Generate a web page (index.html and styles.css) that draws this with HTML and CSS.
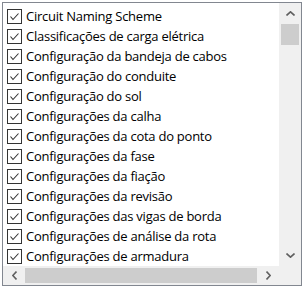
FILE: index.html
```html
<!DOCTYPE html>
<html>
<head>
<meta charset="utf-8">
<link rel="stylesheet" href="styles.css">
</head>
<body>
<div class="listbox">
  <div class="items">
    <div class="item"><span class="cb"><svg viewBox="0 0 13 13"><polyline points="2.5,6.5 5,9.5 10.5,3.5"/></svg></span><span class="label">Circuit Naming Scheme</span></div>
    <div class="item"><span class="cb"><svg viewBox="0 0 13 13"><polyline points="2.5,6.5 5,9.5 10.5,3.5"/></svg></span><span class="label">Classificações de carga elétrica</span></div>
    <div class="item"><span class="cb"><svg viewBox="0 0 13 13"><polyline points="2.5,6.5 5,9.5 10.5,3.5"/></svg></span><span class="label">Configuração da bandeja de cabos</span></div>
    <div class="item"><span class="cb"><svg viewBox="0 0 13 13"><polyline points="2.5,6.5 5,9.5 10.5,3.5"/></svg></span><span class="label">Configuração do conduite</span></div>
    <div class="item"><span class="cb"><svg viewBox="0 0 13 13"><polyline points="2.5,6.5 5,9.5 10.5,3.5"/></svg></span><span class="label">Configuração do sol</span></div>
    <div class="item"><span class="cb"><svg viewBox="0 0 13 13"><polyline points="2.5,6.5 5,9.5 10.5,3.5"/></svg></span><span class="label">Configurações da calha</span></div>
    <div class="item"><span class="cb"><svg viewBox="0 0 13 13"><polyline points="2.5,6.5 5,9.5 10.5,3.5"/></svg></span><span class="label">Configurações da cota do ponto</span></div>
    <div class="item"><span class="cb"><svg viewBox="0 0 13 13"><polyline points="2.5,6.5 5,9.5 10.5,3.5"/></svg></span><span class="label">Configurações da fase</span></div>
    <div class="item"><span class="cb"><svg viewBox="0 0 13 13"><polyline points="2.5,6.5 5,9.5 10.5,3.5"/></svg></span><span class="label">Configurações da fiação</span></div>
    <div class="item"><span class="cb"><svg viewBox="0 0 13 13"><polyline points="2.5,6.5 5,9.5 10.5,3.5"/></svg></span><span class="label">Configurações da revisão</span></div>
    <div class="item"><span class="cb"><svg viewBox="0 0 13 13"><polyline points="2.5,6.5 5,9.5 10.5,3.5"/></svg></span><span class="label">Configurações das vigas de borda</span></div>
    <div class="item"><span class="cb"><svg viewBox="0 0 13 13"><polyline points="2.5,6.5 5,9.5 10.5,3.5"/></svg></span><span class="label">Configurações de análise da rota</span></div>
    <div class="item"><span class="cb"><svg viewBox="0 0 13 13"><polyline points="2.5,6.5 5,9.5 10.5,3.5"/></svg></span><span class="label">Configurações de armadura</span></div>
  </div>
  <div class="vscroll">
    <div class="arrow"><svg viewBox="0 0 9 5"><polyline points="0.5,4.5 4.5,0.8 8.5,4.5"/></svg></div>
    <div class="vtrack"><div class="vthumb"></div></div>
    <div class="arrow"><svg viewBox="0 0 9 5"><polyline points="0.5,0.5 4.5,4.2 8.5,0.5"/></svg></div>
  </div>
  <div class="hscroll">
    <div class="harrow"><svg viewBox="0 0 5 9"><polyline points="4.5,0.5 0.8,4.5 4.5,8.5"/></svg></div>
    <div class="htrack"><div class="hthumb"></div></div>
    <div class="harrow"><svg viewBox="0 0 5 9"><polyline points="0.5,0.5 4.2,4.5 0.5,8.5"/></svg></div>
  </div>
  <div class="corner"></div>
</div>
</body>
</html>
```
FILE: styles.css
```css
html, body {
  margin: 0;
  padding: 0;
  background: #ffffff;
}
.listbox {
  margin: 2px;
  width: 300px;
  height: 284px;
  box-sizing: border-box;
  border: 1px solid #828790;
  display: grid;
  grid-template-columns: 276px 22px;
  grid-template-rows: 263px 19px;
  background: #ffffff;
}
.items {
  overflow: hidden;
  padding-top: 3px;
  font-family: "Open Sans", "Noto Sans", sans-serif;
  font-size: 13px;
  letter-spacing: -0.25px;
  color: #000;
}
.item {
  height: 20px;
  display: flex;
  align-items: center;
  white-space: nowrap;
}
.cb {
  width: 13px;
  height: 13px;
  border: 1px solid #333333;
  margin-left: 4px;
  margin-right: 4px;
  flex: none;
  display: flex;
  background: #fff;
}
.cb svg {
  width: 13px;
  height: 13px;
  fill: none;
  stroke: #333333;
  stroke-width: 1.1;
}
.label {
  line-height: 20px;
}
.vscroll {
  background: #f0f0f0;
  display: flex;
  flex-direction: column;
}
.arrow {
  height: 21px;
  display: flex;
  align-items: center;
  justify-content: center;
  flex: none;
}
.arrow svg {
  width: 9px;
  height: 5px;
  fill: none;
  stroke: #606060;
  stroke-width: 1.6;
}
.vtrack {
  flex: 1;
  padding: 0 2px;
}
.vthumb {
  height: 21px;
  background: #cdcdcd;
}
.hscroll {
  background: #f0f0f0;
  display: flex;
}
.harrow {
  width: 22px;
  display: flex;
  align-items: center;
  justify-content: center;
  flex: none;
}
.harrow svg {
  width: 5px;
  height: 9px;
  fill: none;
  stroke: #606060;
  stroke-width: 1.6;
}
.htrack {
  flex: 1;
  padding: 2px 0;
  display: flex;
}
.hthumb {
  width: 232px;
  background: #cdcdcd;
}
.corner {
  background: #f0f0f0;
}
```
